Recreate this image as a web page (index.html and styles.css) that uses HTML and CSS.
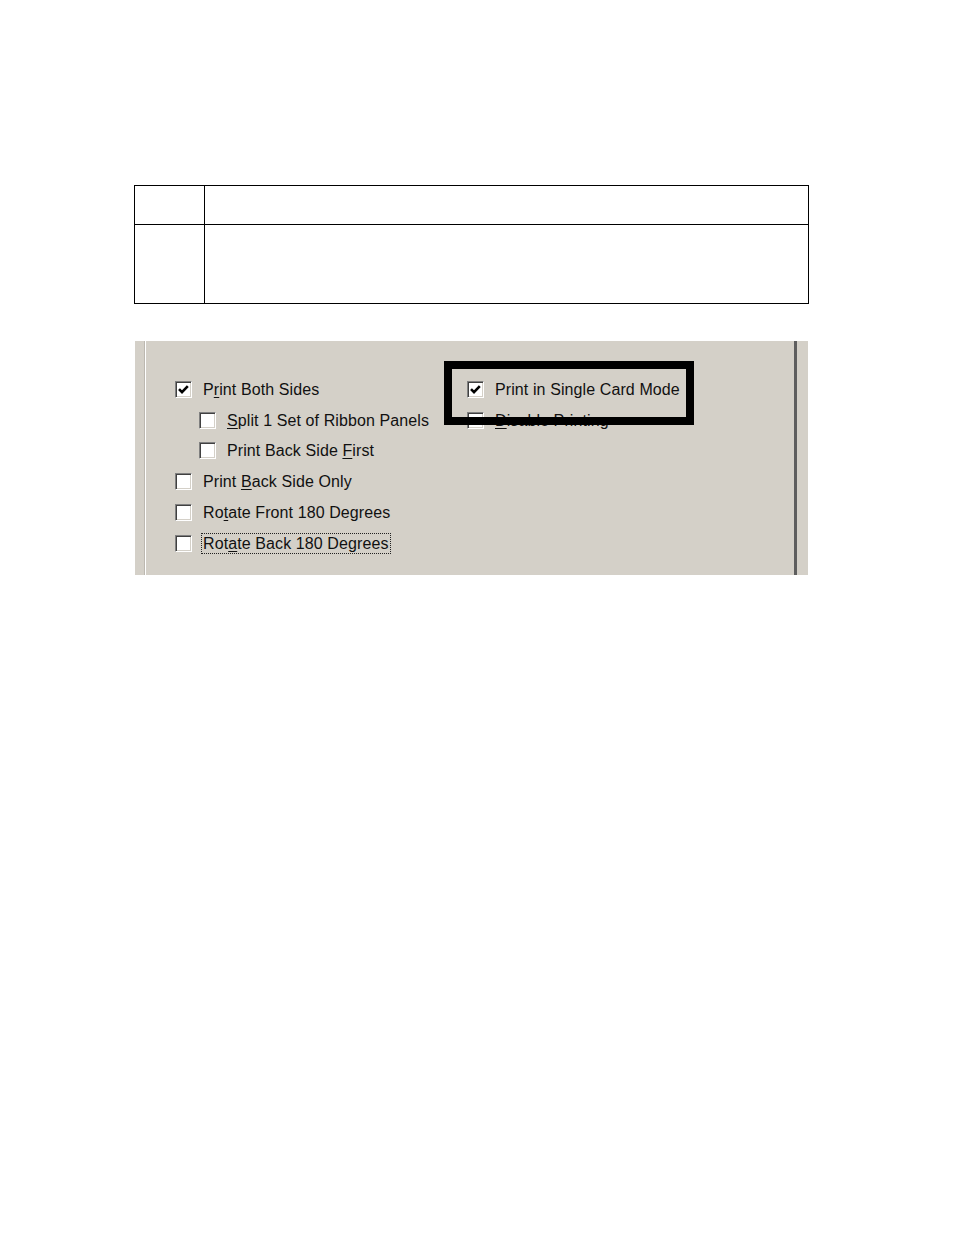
FILE: index.html
```html
<!DOCTYPE html>
<html>
<head>
<meta charset="utf-8">
<link rel="stylesheet" href="styles.css">
</head>
<body>
<div class="table">
  <div class="cell c1 r1"></div>
  <div class="cell c2 r1"></div>
  <div class="cell c1 r2"></div>
  <div class="cell c2 r2"></div>
</div>

<div class="panel">
  <div class="content">
    <div class="col left">
      <div class="row"><span class="cb checked"><svg viewBox="0 0 17 17" width="17" height="17"><path d="M4 8.2 L7 11.2 L12.8 5.2" fill="none" stroke="#000" stroke-width="2.6"/></svg></span><span class="lbl">P<u>r</u>int Both Sides</span></div>
      <div class="row sub"><span class="cb"></span><span class="lbl"><u>S</u>plit 1 Set of Ribbon Panels</span></div>
      <div class="row sub"><span class="cb"></span><span class="lbl">Print Back Side <u>F</u>irst</span></div>
      <div class="row"><span class="cb"></span><span class="lbl">Print <u>B</u>ack Side Only</span></div>
      <div class="row"><span class="cb"></span><span class="lbl">Ro<u>t</u>ate Front 180 Degrees</span></div>
      <div class="row"><span class="cb"></span><span class="lbl focus">Rot<u>a</u>te Back 180 Degrees</span></div>
    </div>
    <div class="col right">
      <div class="row"><span class="cb checked"><svg viewBox="0 0 17 17" width="17" height="17"><path d="M4 8.2 L7 11.2 L12.8 5.2" fill="none" stroke="#000" stroke-width="2.6"/></svg></span><span class="lbl">Print in Single Card Mode</span></div>
      <div class="row"><span class="cb"></span><span class="lbl"><u>D</u>isable Printing</span></div>
    </div>
  </div>
  <div class="highlight"></div>
</div>
</body>
</html>
```

FILE: styles.css
```css
html, body {
  margin: 0;
  padding: 0;
  background: #fff;
}

body {
  font-family: "Liberation Sans", Arial, sans-serif;
  padding-top: 185px;
}

.table {
  margin-left: 134px;
  width: 675px;
  box-sizing: border-box;
  display: grid;
  grid-template-columns: 70px 1fr;
  grid-template-rows: 39px 78px;
  border: 1px solid #000;
}

.cell {
  box-sizing: border-box;
}

.c1 {
  border-right: 1px solid #000;
}

.r1 {
  border-bottom: 1px solid #000;
}

.panel {
  position: relative;
  margin-top: 37px;
  margin-left: 135px;
  width: 673px;
  height: 234px;
  background: #d4d0c8;
  box-sizing: border-box;
  padding-left: 9px;
  padding-right: 11px;
  display: flex;
}

.content {
  flex: 1;
  border-left: 1px solid #bcb8b0;
  box-shadow: inset 1px 0 #fff;
  border-right: 3px solid #5e5e5e;
  display: flex;
  padding-left: 30px;
  padding-top: 33px;
}

.col {
  display: flex;
  flex-direction: column;
}

.left {
  width: 292px;
}

.row {
  height: 30.8px;
  display: flex;
  align-items: center;
  font-size: 16px;
  color: #111;
  white-space: nowrap;
}

.row.sub {
  padding-left: 24px;
}

.cb {
  width: 17px;
  height: 17px;
  box-sizing: border-box;
  background: #fff;
  border: 1px solid;
  border-color: #808080 #fff #fff #808080;
  box-shadow: inset 1px 1px #404040, inset -1px -1px #d4d0c8;
  position: relative;
  flex: none;
  margin-right: 11px;
}

.cb svg {
  position: absolute;
  left: -1px;
  top: -1px;
}

.lbl {
  letter-spacing: 0.1px;
  line-height: 19px;
}

.lbl u {
  text-decoration-thickness: 1px;
  text-underline-offset: 2px;
}

.focus {
  outline: 1px dotted #222;
  outline-offset: 0;
  margin-left: -1px;
  padding: 0 1px;
}

.highlight {
  position: absolute;
  left: 309px;
  top: 20px;
  width: 250px;
  height: 64px;
  box-sizing: border-box;
  border: 8px solid #000;
}
```
